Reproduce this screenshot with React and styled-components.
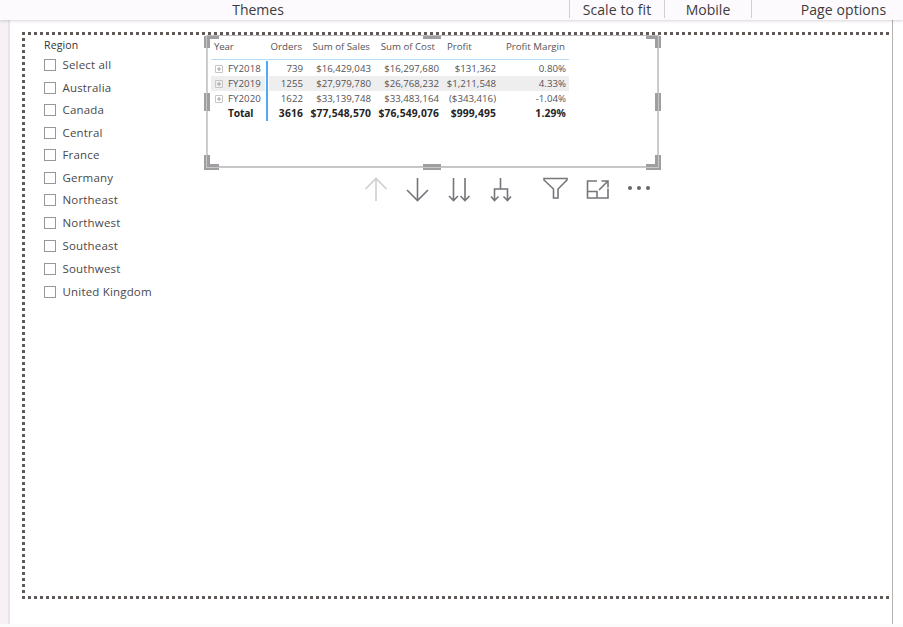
import React from "react";
import styled, { createGlobalStyle, css } from "styled-components";

const GlobalStyle = createGlobalStyle`
  * { box-sizing: border-box; }
  body { margin: 0; background: #fff; overflow: hidden; font-family: "Open Sans", "Noto Sans", sans-serif; }
`;

const Page = styled.div`
  width: 903px;
  height: 627px;
  display: flex;
  flex-direction: column;
  background: #fbfbfb;
`;

const Ribbon = styled.header`
  position: relative;
  z-index: 1;
  height: 20px;
  flex: none;
  display: grid;
  grid-template-columns: 516px 54px 95px 87px 151px;
  background: #fdfafd;
  box-shadow: 0 1px 3px rgba(0, 0, 0, 0.17);
`;

const RibbonGroup = styled.div`
  height: 18px;
  font-size: 14px;
  line-height: 20px;
  letter-spacing: ${(p) => p.$spacing || 0}px;
  text-align: center;
  white-space: nowrap;
  color: #3c3b3d;
  border-right: ${(p) => (p.$divided ? "1px solid #d2cfd2" : "0")};
  padding-left: ${(p) => p.$indent || 0}px;
`;

const Workspace = styled.main`
  height: 604px;
  display: grid;
  grid-template-columns: 10px 882px 11px;
`;

const Gutter = styled.div`
  background: #f5f1f5;
  border-right: 2px solid #ebe3e6;
`;

const Outside = styled.div`
  background: #fff;
  border-left: 1px solid #b5b3b2;
`;

const Sheet = styled.div`
  background: #fff;
  padding: 12px 0 0 12px;
`;

const dot = "#5f5957 0 3px, transparent 3px 6px";
const Canvas = styled.section`
  width: 867px;
  height: 567px;
  padding: 3px 0 0 22px;
  display: grid;
  grid-template-columns: 162px 453px;
  align-items: start;
  background:
    repeating-linear-gradient(90deg, ${dot}) top / 100% 3px no-repeat,
    repeating-linear-gradient(90deg, ${dot}) bottom / 100% 3px no-repeat,
    repeating-linear-gradient(180deg, ${dot}) left / 3px 100% no-repeat;
`;

const Slicer = styled.div`
  padding-top: 2px;
  color: #4a484b;
`;

const SlicerTitle = styled.div`
  font-size: 10.5px;
  line-height: 16px;
  letter-spacing: 0.15px;
  color: #333;
`;

const Options = styled.div`
  padding-top: 1px;
  display: grid;
  grid-template-rows: repeat(7, 22.55px) 23.6px repeat(3, 22.55px);
`;

const Option = styled.label`
  display: flex;
  align-items: center;
  height: 22px;
  gap: 6.5px;
  font-size: 11.5px;
  letter-spacing: 0.18px;
  white-space: nowrap;
`;

const OptionText = styled.span`
  margin-top: -1px;
`;

const CheckBox = styled.span`
  width: 12px;
  height: 12px;
  border: 1px solid #99969b;
`;

const VisualColumn = styled.div`
  display: flex;
  flex-direction: column;
`;

const Visual = styled.div`
  position: relative;
  width: 453px;
  height: 133px;
  border: 1px solid #bfbdbf;
  border-width: 1px 2px 2px;
  border-color: #bdbbbd #d0ced0 #c6c4c6;
  padding: 3px 0 0 3px;

  &::after {
    content: "";
    position: absolute;
    inset: -1px -2px -2px;
    border: 1px solid #c9c7c9;
    border-width: 0 1px 1px;
    pointer-events: none;
  }
`;

const Handle = styled.span`
  position: absolute;
  ${(p) => p.$v}: ${(p) => (p.$v === "top" ? "0px" : "-4px")};
  ${(p) => p.$h}: -4px;
  width: 15px;
  height: ${(p) => (p.$v === "top" ? 12 : 15)}px;
  border: 0 solid #a09ea0;
  border-${(p) => p.$v}-width: ${(p) => (p.$v === "top" ? 3 : 6)}px;
  border-${(p) => p.$h}-width: 6px;
`;

const Grip = styled.span`
  position: absolute;
  background: #a09ea0;
  ${(p) =>
    p.$side === "top" || p.$side === "bottom"
      ? css`
          left: 215px;
          width: 18px;
          height: ${p.$side === "top" ? 3 : 6}px;
          ${p.$side}: ${p.$side === "top" ? 0 : -4}px;
        `
      : css`
          top: 57px;
          width: 6px;
          height: 18px;
          ${p.$side}: -4px;
        `}
`;

const Matrix = styled.div`
  width: 358px;
  color: #555256;
  font-size: 9.7px;
  line-height: 15px;
`;

const cols = "56px 39px 68px 68px 57px 70px";
const HeadRow = styled.div`
  display: grid;
  grid-template-columns: ${cols};
  height: 21px;
  border-bottom: 1px solid #b9dcf9;
`;

const HeadCell = styled.span`
  padding-right: ${(p) => p.$right || 0}px;
  padding-left: ${(p) => p.$left || 0}px;
  text-align: ${(p) => (p.$left ? "left" : "right")};
  white-space: nowrap;
  letter-spacing: ${(p) => p.$spacing || 0}px;
`;

const Rows = styled.div`
  padding-top: 1px;
  background: linear-gradient(#4fa9f5, #4fa9f5) 55px 1px / 2px 100% no-repeat;
`;

const Row = styled.div`
  display: grid;
  grid-template-columns: ${cols};
  height: 15px;
  font-weight: ${(p) => (p.$total ? 700 : 400)};
  font-size: ${(p) => (p.$total ? 10.3 : 9.7)}px;
  color: ${(p) => (p.$total ? "#252326" : "inherit")};
  background: ${(p) =>
    p.$banded
      ? "linear-gradient(#efeeef, #efeeef) 0 0 / 54px 100% no-repeat, linear-gradient(#efeeef, #efeeef) 58px 0 / 300px 100% no-repeat"
      : "none"};
`;

const RowHead = styled.span`
  display: flex;
  align-items: center;
  gap: 5px;
  padding-left: ${(p) => (p.$total ? 17 : 4)}px;
  letter-spacing: ${(p) => (p.$total ? -0.2 : 0.05)}px;
  white-space: nowrap;
`;

const Expander = styled.svg`
  width: 8px;
  height: 8px;
  flex: none;
`;

const Cell = styled.span`
  text-align: right;
  padding-right: 3px;
  white-space: nowrap;
  letter-spacing: ${(p) => p.$spacing || 0}px;
`;

const Toolbar = styled.div`
  padding: 9px 0 0 158px;
  display: grid;
  grid-template-columns: 41px 42px 42px 54px 43px 41px 26px;
`;

const Icon = styled.svg`
  width: 26px;
  height: 26px;
  overflow: visible;
  fill: none;
  stroke: ${(p) => (p.$muted ? "#cfcdd0" : "#77747a")};
  stroke-width: 1.6;
`;

const regions = ["Select all", "Australia", "Canada", "Central", "France", "Germany", "Northeast", "Northwest", "Southeast", "Southwest", "United Kingdom"];

const years = [
  ["FY2018", "739", "$16,429,043", "$16,297,680", "$131,362", "0.80%"],
  ["FY2019", "1255", "$27,979,780", "$26,768,232", "$1,211,548", "4.33%"],
  ["FY2020", "1622", "$33,139,748", "$33,483,164", "($343,416)", "-1.04%"],
  ["Total", "3616", "$77,548,570", "$76,549,076", "$999,495", "1.29%"],
];

function MatrixRow({ data, index }) {
  const total = index === 3;
  const [name, ...values] = data;
  return (
    <Row $total={total} $banded={index === 1}>
      <RowHead $total={total}>
        {!total && (
          <Expander viewBox="0 0 8 8" fill="none" stroke="#c8c5c9">
            <path d="M.5.5h7v7h-7z" />
            <path d="M2 4h4M4 2v4" stroke="#a5a2a6" />
          </Expander>
        )}
        {name}
      </RowHead>
      {values.map((v, i) => (
        <Cell key={i} $spacing={total ? 0.15 : 0}>{v}</Cell>
      ))}
    </Row>
  );
}

export default function App() {
  return (
    <Page>
      <GlobalStyle />
      <Ribbon>
        <RibbonGroup>Themes</RibbonGroup>
        <RibbonGroup $divided />
        <RibbonGroup $divided $spacing={0.1}>Scale to fit</RibbonGroup>
        <RibbonGroup $divided>Mobile</RibbonGroup>
        <RibbonGroup $indent={32} $spacing={0.1}>Page options</RibbonGroup>
      </Ribbon>
      <Workspace>
        <Gutter />
        <Sheet>
          <Canvas>
            <Slicer>
              <SlicerTitle>Region</SlicerTitle>
              <Options>
                {regions.map((r) => (
                  <Option key={r}>
                    <CheckBox />
                    <OptionText>{r}</OptionText>
                  </Option>
                ))}
              </Options>
            </Slicer>
            <VisualColumn>
              <Visual>
                <Matrix>
                  <HeadRow>
                    <HeadCell $left={3} $spacing={-0.2}>Year</HeadCell>
                    <HeadCell $right={4}>Orders</HeadCell>
                    <HeadCell $right={4}>Sum of Sales</HeadCell>
                    <HeadCell $right={7}>Sum of Cost</HeadCell>
                    <HeadCell $left={5}>Profit</HeadCell>
                    <HeadCell $right={4}>Profit Margin</HeadCell>
                  </HeadRow>
                  <Rows>
                    {years.map((y, i) => (
                      <MatrixRow key={y[0]} data={y} index={i} />
                    ))}
                  </Rows>
                </Matrix>
                <Handle $v="top" $h="left" />
                <Handle $v="top" $h="right" />
                <Handle $v="bottom" $h="left" />
                <Handle $v="bottom" $h="right" />
                <Grip $side="top" />
                <Grip $side="right" />
                <Grip $side="bottom" />
                <Grip $side="left" />
              </Visual>
              <Toolbar>
                <Icon $muted viewBox="0 0 26 26"><path d="M12 24V1.500M1.500 12 12 1.500 22.500 12" /></Icon>
                <Icon viewBox="0 0 26 26"><path d="M12.500 1v22.500M2 13l10.500 10.500L23 13" /></Icon>
                <Icon viewBox="0 0 26 26"><path d="M6.500 1v22.500M18 1v22.500M2 19l4.500 4.500 4.500-4.500M13.500 19l4.500 4.500 4.500-4.500" /></Icon>
                <Icon viewBox="0 0 26 26"><path d="M11.500 1v11M5.500 23.500V12h13v11.500M2 19.500l3.500 4 4-4M14.500 19.500l4 4 3.500-4" /></Icon>
                <Icon viewBox="0 0 26 26"><path d="M1 1.500h23v1.500l-9 9v9H10.500v-9L1 3z" /></Icon>
                <Icon viewBox="0 0 26 26"><path d="M11 4H1.500v17h20.500V11.500M1.500 14.500h9.500v6.500M13 13 22 4M15.500 4h6.500v6.500" /></Icon>
                <Icon viewBox="0 0 26 26"><g fill="#69666b" stroke="none"><circle cx="3" cy="11" r="2" /><circle cx="12" cy="11" r="2" /><circle cx="21" cy="11" r="2" /></g></Icon>
              </Toolbar>
            </VisualColumn>
          </Canvas>
        </Sheet>
        <Outside />
      </Workspace>
    </Page>
  );
}
